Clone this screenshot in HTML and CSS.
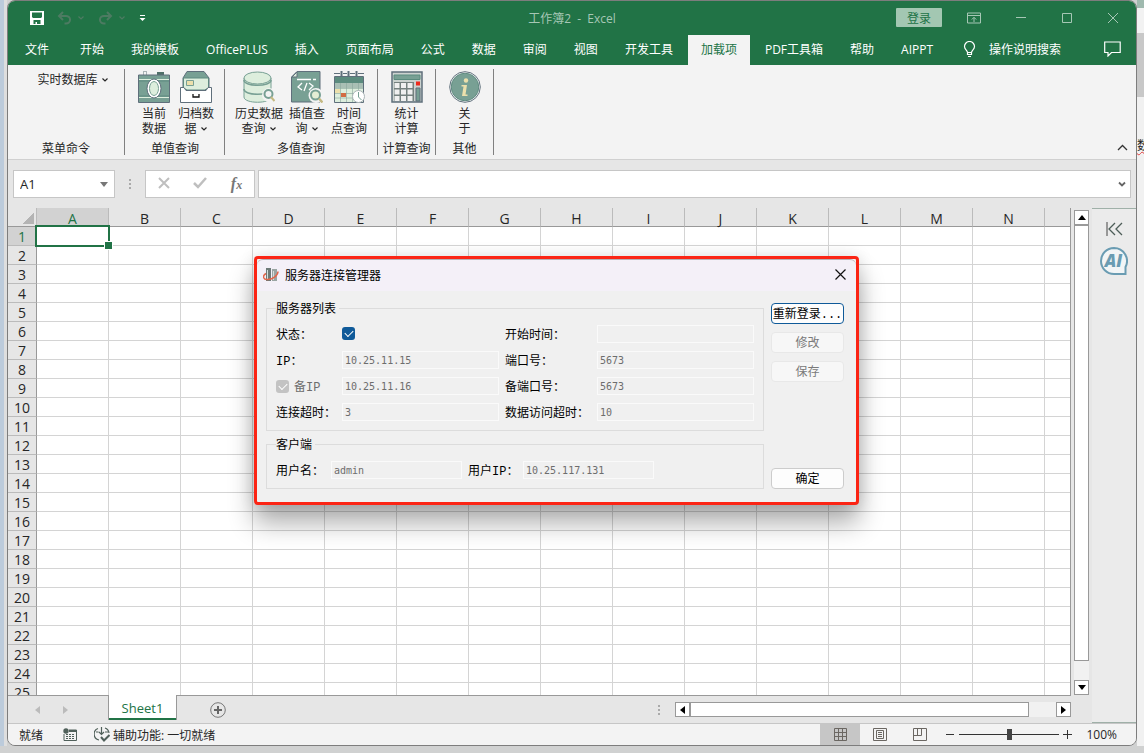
FILE: index.html
```html
<!DOCTYPE html>
<html lang="zh-CN">
<head>
  <meta charset="UTF-8" />
  <meta name="viewport" content="width=device-width, initial-scale=1.0" />
  <title>工作簿2 - Excel</title>
  <link rel="stylesheet" href="styles.css">
</head>
<body>

<svg class="symbols" aria-hidden="true">
  <symbol id="chevron" viewBox="0 0 8 8"><path d="M1.500 2.500l2.500 2.500 2.500-2.500" fill="none" stroke="currentColor" stroke-width="1.200"/></symbol>
</svg>

<div class="backdrop-left"></div>

<div class="window">
  <header class="titlebar">
    <div class="quick">
      <button aria-label="保存"><svg width="14" height="14" viewBox="0 0 14 14"><path fill="#fff" fill-rule="evenodd" d="M0 0h14v14H0zM2 1.500v4.500l1 1h8l1-1V1.500zM3.500 9v4H5.500v-2h1.500v2h3.500V9z"/></svg></button>
      <button class="dim" aria-label="撤消"><svg width="15" height="14" viewBox="0 0 15 14"><path d="M6 1L2 5l4 4M2 5h7a4 3.700 0 0 1 0 7.500H7.500" fill="none" stroke="currentColor" stroke-width="2"/></svg><svg width="8" height="8"><use href="#chevron"/></svg></button>
      <button class="dim" aria-label="恢复"><svg width="15" height="14" viewBox="0 0 15 14"><path d="M9 1l4 4-4 4M13 5H6a4 3.700 0 0 0 0 7.500H7.500" fill="none" stroke="currentColor" stroke-width="2"/></svg><svg width="8" height="8"><use href="#chevron"/></svg></button>
      <button aria-label="自定义快速访问工具栏"><svg width="7" height="8" viewBox="0 0 7 8"><path d="M1 1.500h5" stroke="#fff"/><path d="M.5 4h6l-3 3z" fill="#fff"/></svg></button>
    </div>
    <div class="title">工作簿2 &nbsp;- &nbsp;Excel</div>
    <div class="controls">
      <button class="login">登录</button>
      <button aria-label="功能区显示选项"><svg width="14" height="12" viewBox="0 0 14 12"><path d="M.5 1h13v10H.5zM.5 3.500h13M7 10V5.500M4.800 7.500L7 5.300l2.200 2.200" fill="none" stroke="currentColor"/></svg></button>
      <button aria-label="最小化"><svg width="12" height="12"><path d="M1 5.500h10" stroke="currentColor"/></svg></button>
      <button aria-label="最大化"><svg width="12" height="12"><path d="M1.500 1.500h9v9h-9z" fill="none" stroke="currentColor"/></svg></button>
      <button aria-label="关闭"><svg width="12" height="12"><path d="M1 1l10 10M11 1L1 11" stroke="currentColor"/></svg></button>
    </div>
  </header>

  <nav class="tabs">
    <a class="file" href="#">文件</a>
    <a href="#">开始</a>
    <a href="#">我的模板</a>
    <a href="#">OfficePLUS</a>
    <a href="#">插入</a>
    <a href="#">页面布局</a>
    <a href="#">公式</a>
    <a href="#">数据</a>
    <a href="#">审阅</a>
    <a href="#">视图</a>
    <a href="#">开发工具</a>
    <a class="active" href="#">加载项</a>
    <a href="#">PDF工具箱</a>
    <a href="#">帮助</a>
    <a href="#">AIPPT</a>
    <a class="tellme" href="#"><svg width="13" height="17" viewBox="0 0 13 17"><path d="M4.500 11.500c0-2-3-3-3-6a5 5 0 0 1 10 0c0 3-3 4-3 6v2h-4zM4.500 11.500h4M5 15.500h3" fill="none" stroke="#fff" stroke-width="1.200"/></svg>操作说明搜索</a>
    <button class="comment" aria-label="批注"><svg width="17" height="16" viewBox="0 0 17 16"><path d="M.7 1h15.500v10.500H7.500L4 15v-3.500H.7z" fill="none" stroke="#fff" stroke-width="1.200"/></svg></button>
  </nav>

  <div class="ribbon">
    <section class="group menu-group">
      <button class="menu-button">实时数据库<svg width="8" height="8"><use href="#chevron"/></svg></button>
      <div class="group-name">菜单命令</div>
    </section>
    <section class="group single">
      <div class="tools">
        <button>
          <svg width="32" height="32" viewBox="0 0 32 32"><path d="M5.500 0v4M8.500 0v4M5 .5h4" stroke="#a9b3b5"/><path d="M19 1h7v3h-7z" fill="#4f6f68"/><path d="M.5 4h31v27.500H.5z" fill="#78a094" stroke="#5f6f7b"/><path d="M1 8.500h30M1 26.500h30" stroke="#ddeedd"/><path d="M1 10h30M1 25h30" stroke="#5f8a80"/><ellipse cx="16" cy="17.500" rx="7" ry="9.500" fill="#fff" stroke="#5f6f7b"/><ellipse cx="16" cy="17.500" rx="4.500" ry="7" fill="#ddeedd" stroke="#78a094"/></svg>
          <span>当前<br>数据</span>
        </button>
        <button>
          <svg width="32" height="32" viewBox="0 0 32 32"><path d="M3 7l4-6.500h17L29 7v12H3z" fill="#78a094" stroke="#5f6f7b"/><path d="M3.500 7h25v10l-4 2H7l-3.500-2z" fill="#ddeedd" stroke="#5f8a80"/><path d="M6.500 9.500h7v5h-7z" fill="#ece0ac" stroke="#78a094"/><path d="M.5 16.500H4l2 3h20l2-3h3.500v15H.5z" fill="#fff" stroke="#5f6f7b"/><path d="M13 23v3h6v-3" fill="none" stroke="#111" stroke-width="1.300"/></svg>
          <span>归档数<br>据 <svg width="8" height="8"><use href="#chevron"/></svg></span>
        </button>
      </div>
      <div class="group-name">单值查询</div>
    </section>
    <section class="group multi">
      <div class="tools">
        <button class="wide">
          <svg width="32" height="32" viewBox="0 0 32 32"><path d="M1 7v19c0 7 27 7 27 0V7" fill="#ddeedd" stroke="#78a094"/><ellipse cx="14.500" cy="7" rx="13.500" ry="6" fill="#ddeedd" stroke="#78a094"/><path d="M1 9c0 7 27 7 27 0M1 18c0 7 27 7 27 0" fill="none" stroke="#78a094" stroke-width="1.600"/><circle cx="26" cy="24" r="7" fill="#f3f3f3"/><circle cx="25.500" cy="23" r="4" fill="none" stroke="#78a094" stroke-width="2"/><path d="M28 26l3.500 4" stroke="#c4b982" stroke-width="2"/></svg>
          <span>历史数据<br>查询 <svg width="8" height="8"><use href="#chevron"/></svg></span>
        </button>
        <button>
          <svg width="32" height="32" viewBox="0 0 32 32"><path d="M6 .5h23v30.500H.5V6z" fill="#78a094" stroke="#5f6f7b"/><path d="M6 1v5H1z" fill="#ddeedd" stroke="#5f6f7b"/><path d="M6 8.500h14M22 8.500h3" stroke="#fff" stroke-width="1.500"/><path d="M11 12l-4 4 4 3M18 12l4 3-4 4M16 12l-3 8" fill="none" stroke="#fff" stroke-width="1.300"/><circle cx="25" cy="24.500" r="7.500" fill="#f3f3f3"/><circle cx="24.500" cy="24" r="4.500" fill="#e4edd5" stroke="#78a094" stroke-width="2"/><path d="M28 27.500l3.500 4" stroke="#c4b982" stroke-width="2.500"/></svg>
          <span>插值查<br>询 <svg width="8" height="8"><use href="#chevron"/></svg></span>
        </button>
        <button>
          <svg width="32" height="32" viewBox="0 0 32 32"><path d="M1.500 5.500h29v26h-29z" fill="#ddeedd" stroke="#5f6f7b"/><path d="M2 6h28v6H2z" fill="#5b8b7e"/><path d="M2 12h28v5H2z" fill="#a9bfb5"/><path d="M2 18h5v4H2z" fill="#ece0ac"/><path d="M2 17.500h28M2 22.500h28M2 27h28M7.500 12v19M13.500 12v19M19.500 12v19M25.500 12v19" stroke="#8aa69c" stroke-opacity=".6"/><path d="M8 22h5v4H8z" fill="#d26b42"/><path d="M1 2.500h6M10 2.500h4M17 2.500h5M25 2.500h6" stroke="#5f6f7b"/><path d="M8.500 0v5M15.500 0v5M23.500 0v5" stroke="#5f6f7b" stroke-width="2"/><circle cx="25.500" cy="25.500" r="6" fill="#fff" stroke="#a9b3b5"/><path d="M25.500 21v5l3 3" fill="none" stroke="#78a094"/></svg>
          <span>时间<br>点查询</span>
        </button>
      </div>
      <div class="group-name">多值查询</div>
    </section>
    <section class="group">
      <div class="tools">
        <button>
          <svg width="32" height="32" viewBox="0 0 32 32"><path d="M1 1h30v30H1z" fill="#cbd2cf" stroke="#5f6f7b" stroke-width="1.500"/><path d="M3 4h26v4.500H3z" fill="#78a094" stroke="#5b8b7e"/><path d="M3 11h20v19H3z" fill="#75817f"/><g fill="#f0f0f0"><path d="M3.500 12h5v5h-5zM10 12h5v5h-5zM16.500 12h5v5h-5zM3.500 18.500h5v5h-5zM10 18.500h5v5h-5zM16.500 18.500h5v5h-5zM3.500 25h5v5h-5zM10 25h5v5h-5zM16.500 25h5v5h-5z"/></g><path d="M25 10.500h4v4h-4z" fill="#ed2a1c"/><path d="M25 17h4v13h-4z" fill="#78a094" stroke="#5f6f7b"/></svg>
          <span>统计<br>计算</span>
        </button>
      </div>
      <div class="group-name">计算查询</div>
    </section>
    <section class="group">
      <div class="tools">
        <button>
          <svg width="32" height="32" viewBox="0 0 32 32"><circle cx="16" cy="16" r="15.300" fill="#fff" stroke="#5f6f7b"/><circle cx="16" cy="16" r="13.800" fill="#78a094" stroke="#5f8a80"/><circle cx="17" cy="9.500" r="2.200" fill="#ece0ac"/><path d="M12.500 14h5.500l-1.500 9.500h2V25h-5.500l1.500-9.500h-2z" fill="#ece0ac"/></svg>
          <span>关<br>于</span>
        </button>
      </div>
      <div class="group-name">其他</div>
    </section>
    <button class="collapse" aria-label="折叠功能区"><svg width="11" height="7"><path d="M1 6l4.500-4.500L10 6" fill="none" stroke="#333" stroke-width="1.300"/></svg></button>
  </div>

  <div class="formula-bar">
    <div class="name-box">
      <input type="text" value="A1" aria-label="名称框">
      <svg width="8" height="5"><path d="M0 0h8L4 5z" fill="#777"/></svg>
    </div>
    <div class="grip"></div>
    <div class="formula-buttons">
      <button aria-label="取消"><svg width="12" height="12"><path d="M1 1l10 10M11 1L1 11" stroke="#bfbfbf" stroke-width="2"/></svg></button>
      <button aria-label="输入"><svg width="14" height="12"><path d="M1 6l4 4 8-9" fill="none" stroke="#bfbfbf" stroke-width="2.500"/></svg></button>
      <button class="fx" aria-label="插入函数">f<small>x</small></button>
    </div>
    <div class="formula-input">
      <input type="text" aria-label="编辑栏">
      <svg width="8" height="8"><path d="M1 2.500l3 3 3-3" fill="none" stroke="#666" stroke-width="1.800"/></svg>
    </div>
  </div>

  <div class="workspace">
    <main class="book">
      <div class="sheet-area">
        <div class="sheet">
          <table>
            <thead><tr id="columns"></tr></thead>
            <tbody id="rows"></tbody>
          </table>
        </div>
        <div class="scroll vertical">
          <button aria-label="向上滚动"><svg width="8" height="5"><path d="M0 5h8L4 0z"/></svg></button>
          <div class="thumb"></div>
          <button aria-label="向下滚动"><svg width="8" height="5"><path d="M0 0h8L4 5z"/></svg></button>
        </div>
      </div>
      <div class="sheet-tabs">
        <div class="tab-arrows">
          <svg width="5" height="8"><path d="M5 0v8L0 4z" fill="#bbb"/></svg>
          <svg width="5" height="8"><path d="M0 0v8l5-4z" fill="#bbb"/></svg>
        </div>
        <button class="sheet-tab">Sheet1</button>
        <div class="tab-rest">
          <button class="add-sheet" aria-label="新工作表"><svg width="16" height="16"><circle cx="8" cy="8" r="7.300" fill="none" stroke="#777"/><path d="M8 4v8M4 8h8" stroke="#666" stroke-width="2"/></svg></button>
          <div class="grip"></div>
          <div class="scroll horizontal">
            <button aria-label="向左滚动"><svg width="5" height="8"><path d="M5 0v8L0 4z"/></svg></button>
            <div class="thumb"></div>
            <button aria-label="向右滚动"><svg width="5" height="8"><path d="M0 0v8l5-4z"/></svg></button>
          </div>
        </div>
      </div>
    </main>
    <aside class="side-panel">
      <button aria-label="展开"><svg width="17" height="14" viewBox="0 0 17 14"><path d="M1 0v14" stroke="#444"/><path d="M9 1L3 7l6 6M16 1l-6 6 6 6" fill="none" stroke="#4d5d58" stroke-width="1.300"/></svg></button>
      <button aria-label="AI"><svg width="28" height="28" viewBox="0 0 28 28"><path d="M14 1a13 13 0 1 0 0 26h11.500v-7A13 13 0 0 0 14 1z" fill="#f2f5f6" stroke="#6a9cb2" stroke-width="2"/><text x="13.500" y="20" text-anchor="middle" class="ai-text">AI</text></svg></button>
    </aside>
  </div>

  <footer class="status">
    <span class="ready">就绪</span>
    <svg width="14" height="13" viewBox="0 0 14 13"><path d="M1 6v6.500h12.500V2H6" fill="none" stroke="#50605a"/><circle cx="3" cy="3" r="2.700" fill="#50605a"/><path d="M6 2h8v2H6z" fill="#50605a"/><path d="M3 6.500h9M3 8.500h9M3 10.500h9" stroke="#50605a" stroke-dasharray="2 1"/></svg>
    <span class="access"><svg width="16" height="15" viewBox="0 0 16 15"><path d="M4 1.500a6 6 0 0 0 1 11.500M11 1a6 6 0 0 1 4 5M7.500 0v7M5 5l2.500 2.500L10 5M2 5h2.500M11 5h3" fill="none" stroke="#50605a" stroke-width="1.200"/><path d="M7 10l3 3.500L15.500 8" fill="none" stroke="#50605a" stroke-width="2"/></svg>辅助功能: 一切就绪</span>
    <div class="views">
      <button class="current" aria-label="普通"><svg width="13" height="13"><path d="M.5.5h12v12H.5zM.5 4.500h12M.5 8.500h12M4.500.5v12M8.500.5v12" fill="none" stroke="#6b6762"/></svg></button>
      <button aria-label="页面布局"><svg width="14" height="13"><path d="M.5.5h13v12H.5zM3.500 2.500h7v8h-7zM5 4.500h4M5 6.500h4M5 8.500h4" fill="none" stroke="#6b6762"/></svg></button>
      <button aria-label="分页预览"><svg width="14" height="13"><path d="M.5.5h13v12H.5zM.5 7.500h8v-7M4.500.5v7" fill="none" stroke="#6b6762"/></svg></button>
    </div>
    <div class="zoom">
      <button aria-label="缩小"><svg width="9" height="9"><path d="M0 4.500h8" stroke="#333"/></svg></button>
      <input type="range" min="0" max="100" value="50" aria-label="显示比例">
      <button aria-label="放大"><svg width="9" height="9"><path d="M0 4.500h9M4.500 0v9" stroke="#333"/></svg></button>
      <span>100%</span>
    </div>
  </footer>

  <div class="dialog" role="dialog" aria-labelledby="dialog-title">
    <div class="dialog-title">
      <svg width="16" height="14" viewBox="0 0 16 14"><path d="M3 0h5v13H3z" fill="#6d7a78"/><path d="M9 1h5v12H9z" fill="#9aa5a3"/><path d="M4 2h1v10H4zM10 3h1v9h-1z" fill="#d4dcd9"/><path d="M3 5.500C-1 8 0 12 5 11.500s10-4 10-8" fill="none" stroke="#e2654a" stroke-width="1.500"/></svg>
      <h2 id="dialog-title">服务器连接管理器</h2>
      <button aria-label="关闭"><svg width="11" height="11"><path d="M.5.5l10 10M10.500.5l-10 10" stroke="#111" stroke-width="1.200"/></svg></button>
    </div>
    <form class="dialog-body">
      <div class="fields">
        <fieldset>
          <legend>服务器列表</legend>
          <div class="server-grid">
            <label for="state">状态：</label>
            <input type="checkbox" id="state" checked>
            <label for="start">开始时间：</label>
            <input type="text" id="start" disabled>
            <label for="ip">IP：</label>
            <input type="text" id="ip" value="10.25.11.15" disabled>
            <label for="port">端口号：</label>
            <input type="text" id="port" value="5673" disabled>
            <label class="backup"><input type="checkbox" checked disabled>备IP</label>
            <input type="text" value="10.25.11.16" aria-label="备IP" disabled>
            <label for="port2">备端口号：</label>
            <input type="text" id="port2" value="5673" disabled>
            <label for="timeout">连接超时：</label>
            <input type="text" id="timeout" value="3" disabled>
            <label for="data-timeout">数据访问超时：</label>
            <input type="text" id="data-timeout" value="10" disabled>
          </div>
        </fieldset>
        <fieldset>
          <legend>客户端</legend>
          <div class="client-grid">
            <label for="user">用户名：</label>
            <input type="text" id="user" value="admin" disabled>
            <label for="user-ip">用户IP：</label>
            <input type="text" id="user-ip" value="10.25.117.131" disabled>
          </div>
        </fieldset>
      </div>
      <div class="dialog-buttons">
        <button type="button" class="primary">重新登录...</button>
        <button type="button" disabled>修改</button>
        <button type="button" disabled>保存</button>
        <button type="button" class="ok">确定</button>
      </div>
    </form>
  </div>
</div>

<div class="backdrop-right"><span>数</span></div>

<script>
  const letters = "ABCDEFGHIJKLMN".split("");
  const columns = document.getElementById("columns");
  const rows = document.getElementById("rows");

  columns.innerHTML = '<th class="corner"></th>' +
    letters.map((l, i) => `<th class="col${i === 0 ? " selected" : ""}">${l}</th>`).join("") + "<th></th>";

  for (let r = 1; r <= 25; r++) {
    const tr = document.createElement("tr");
    tr.innerHTML = `<th${r === 1 ? ' class="selected"' : ""}>${r}</th>` + "<td></td>".repeat(letters.length + 1);
    rows.appendChild(tr);
  }
  rows.querySelector("td").className = "active-cell";
</script>

</body>
</html>
```
FILE: styles.css
```css
* {
  box-sizing: border-box;
}

html, body {
  margin: 0;
  height: 100%;
}

body {
  display: grid;
  grid-template-columns: 7px 1fr 7px;
  padding-bottom: 7px;
  overflow: hidden;
  background: #d0d1d1;
  font-family: "Open Sans", "Noto Sans CJK SC", sans-serif;
  font-size: 12px;
  color: #262626;
}

button, input {
  font: inherit;
  color: inherit;
  margin: 0;
}

button {
  border: none;
  background: none;
  padding: 0;
}

svg {
  flex: none;
}

.symbols {
  position: absolute;
  width: 0;
  height: 0;
}

.backdrop-left {
  background: #bccbdb;
  border-right: 3px solid #dedede;
}

.backdrop-right {
  overflow: hidden;
  background: linear-gradient(#9fb9ae 8px, #f2f2f2 8px, #f2f2f2 33px, #c8c8c8 33px, #c8c8c8 97px, #f1f1f1 97px);
  padding-top: 136px;
}

.backdrop-right span {
  text-decoration: underline wavy #e04040 1px;
}

.window {
  position: relative;
  display: flex;
  flex-direction: column;
  min-height: 0;
  border: 1px solid #7d7d7d;
  border-radius: 8px;
  overflow: hidden;
  background: #e6e6e6;
}

/* title bar */

.titlebar {
  display: grid;
  grid-template-columns: 1fr auto 1fr;
  align-items: center;
  height: 34px;
  padding-bottom: 1px;
  background: #217346;
  color: #a6c7b5;
}

.quick {
  display: flex;
  align-items: center;
  gap: 13px;
  padding-left: 22px;
}

.quick button {
  display: flex;
  align-items: center;
  gap: 5px;
}

.quick .dim {
  color: #4d7b62;
}

.controls {
  display: flex;
  justify-content: flex-end;
  align-items: center;
  gap: 34px;
  padding-right: 17px;
}

.controls button {
  display: flex;
}

.controls .login {
  justify-content: center;
  align-items: center;
  width: 46px;
  height: 19px;
  margin-right: -9px;
  background: #a3c7b2;
  border-radius: 1px;
  color: #217346;
}

/* ribbon */

.tabs {
  display: flex;
  gap: 3px;
  height: 30px;
  padding-left: 3px;
  background: #217346;
}

.tabs a {
  display: flex;
  align-items: center;
  padding: 0 12px 2px;
  color: #fff;
  text-decoration: none;
  white-space: nowrap;
}

.tabs .file {
  padding: 0 16px 2px 14px;
}

.tabs .active {
  padding: 0 13px 2px;
  background: #f3f3f3;
  color: #217346;
}

.tabs .tellme {
  gap: 13px;
  padding-left: 15px;
}

.comment {
  display: flex;
  align-items: center;
  margin-left: auto;
  padding: 0 15px 2px 0;
}

.ribbon {
  display: flex;
  height: 95px;
  padding: 4px 0;
  background: #f3f3f3;
  border-bottom: 1px solid #d0d0d0;
}

.group {
  display: flex;
  flex-direction: column;
  justify-content: space-between;
  align-items: center;
  min-width: 58px;
  border-right: 1px solid #808080;
}

.menu-group {
  width: 117px;
}

.single {
  padding: 0 7px 0 8px;
}

.multi {
  padding: 0 7px;
}

.menu-button {
  display: flex;
  align-items: center;
  gap: 3px;
  margin-left: 14px;
  line-height: 22px;
}

.tools {
  display: flex;
  padding-top: 2px;
}

.tools button {
  display: flex;
  flex-direction: column;
  align-items: center;
  gap: 3px;
  width: 42px;
  line-height: 15px;
  white-space: nowrap;
}

.tools .wide {
  width: 54px;
}

.group-name {
  line-height: 12px;
  white-space: nowrap;
}

.collapse {
  align-self: flex-end;
  margin-left: auto;
  padding-right: 8px;
}

/* formula bar */

.formula-bar {
  display: flex;
  height: 48px;
  padding: 10px 5px;
}

.name-box, .formula-buttons, .formula-input {
  display: flex;
  align-items: center;
  background: #fff;
  border: 1px solid #c6c6c6;
}

.name-box {
  width: 102px;
  padding: 0 6px;
  font-size: 13px;
}

.name-box input, .formula-input input {
  flex: 1;
  min-width: 0;
  padding: 0;
  border: none;
  background: none;
}

.grip {
  width: 2px;
  height: 10px;
  background: repeating-linear-gradient(#aaa 0, #aaa 2px, transparent 2px, transparent 4px);
}

.formula-bar .grip {
  align-self: center;
  margin: 0 14px;
}

.formula-buttons {
  justify-content: space-around;
  width: 110px;
  margin-right: 3px;
}

.fx {
  font: italic bold 16px "Liberation Serif", serif;
  color: #777;
}

.fx small {
  font-size: 12px;
}

.formula-input {
  flex: 1;
  padding: 0 4px;
}

/* sheet */

.workspace {
  display: flex;
  flex: 1;
  min-height: 0;
}

.book {
  display: flex;
  flex-direction: column;
  flex: 1;
  min-width: 0;
}

.sheet-area {
  display: flex;
  flex: 1;
  gap: 3px;
  min-height: 0;
  padding-right: 3px;
}

.sheet {
  flex: 1;
  overflow: hidden;
  border-right: 1px solid #999;
}

table {
  width: 100%;
  table-layout: fixed;
  border-spacing: 0;
}

th, td {
  height: 19px;
  padding: 0;
  border-right: 1px solid #d4d4d4;
  border-bottom: 1px solid #d4d4d4;
}

td {
  background: #fff;
}

th {
  padding-top: 2px;
  background: #e6e6e6;
  border-right-color: #999;
  border-bottom-color: #bbb;
  font-size: 14px;
  font-weight: 400;
  line-height: 16px;
}

thead th {
  padding-top: 3px;
  border-right-color: #bbb;
  border-bottom-color: #999;
  line-height: 15px;
}

th:last-child, td:last-child {
  border-right: none;
}

.corner {
  width: 29px;
  background: linear-gradient(135deg, #e6e6e6 50%, #b4b4b4 50%) 15px 5px / 11px 11px no-repeat #e6e6e6;
}

.col {
  width: 72px;
}

th.selected {
  background: #d2d2d2;
  color: #217346;
}

.active-cell {
  position: relative;
}

.active-cell::before {
  content: "";
  position: absolute;
  inset: -2px;
  z-index: 1;
  border: 2px solid #217346;
}

.active-cell::after {
  content: "";
  position: absolute;
  right: -5px;
  bottom: -5px;
  z-index: 2;
  width: 7px;
  height: 7px;
  background: #217346;
  border: 1px solid #fff;
}

.scroll {
  display: flex;
  background: #f1f1f1;
}

.scroll button {
  display: flex;
  align-items: center;
  justify-content: center;
  width: 15px;
  height: 15px;
  background: #fff;
  border: 1px solid #999;
}

.scroll .thumb {
  flex: 1;
  background: #fff;
  border: 1px solid #999;
}

.vertical {
  flex-direction: column;
  margin-top: 2px;
}

.vertical .thumb {
  margin-bottom: 19px;
}

.horizontal {
  width: 396px;
}

.horizontal .thumb {
  margin-right: 27px;
}

.sheet-tabs {
  display: flex;
  height: 28px;
}

.tab-arrows {
  display: flex;
  align-items: center;
  gap: 23px;
  width: 100px;
  padding-left: 27px;
  border-top: 1px solid #999;
}

.sheet-tab {
  width: 69px;
  height: 25px;
  background: #fff;
  border: 1px solid #999;
  border-width: 0 1px;
  box-shadow: inset 0 -2px #217346;
  color: #217346;
  font-size: 13px;
}

.tab-rest {
  display: flex;
  align-items: center;
  flex: 1;
  margin-right: 21px;
  padding-left: 33px;
  border-top: 1px solid #999;
}

.add-sheet {
  display: flex;
}

.tab-rest .grip {
  margin: 0 15px 0 auto;
}

.side-panel {
  display: flex;
  flex-direction: column;
  align-items: center;
  gap: 7px;
  width: 44px;
  padding-top: 13px;
  background: #ebebeb;
  border-top: 1px solid #9fb0a8;
  border-bottom: 1px solid #9fb0a8;
}

.ai-text {
  font: italic 800 17px "Open Sans", sans-serif;
  fill: #6a9cb2;
}

/* status bar */

.status {
  display: flex;
  align-items: center;
  height: 22px;
  padding-left: 11px;
  background: #f3f3f3;
  border-top: 1px solid #c6c6c6;
}

.ready {
  margin-right: 20px;
}

.access {
  display: flex;
  align-items: center;
  gap: 3px;
  margin-left: 17px;
}

.views {
  display: flex;
  align-self: stretch;
  margin-left: auto;
}

.views button {
  display: flex;
  align-items: center;
  justify-content: center;
  width: 40px;
}

.views .current {
  background: #c6c6c6;
}

.zoom {
  display: flex;
  align-items: center;
  gap: 4px;
  padding: 0 19px 0 6px;
}

.zoom button {
  display: flex;
}

.zoom span {
  margin-left: 10px;
}

.zoom input {
  appearance: none;
  width: 100px;
  height: 11px;
  background: linear-gradient(#333, #333) center / 100% 1px no-repeat;
}

.zoom input::-webkit-slider-thumb {
  appearance: none;
  width: 5px;
  height: 11px;
  background: #444;
}

/* server dialog */

.dialog {
  position: absolute;
  left: 246px;
  top: 255px;
  z-index: 5;
  width: 605px;
  background: #f0f0f0;
  border: 3px solid #fb2414;
  border-radius: 4px;
  box-shadow: 0 18px 26px rgba(0, 0, 0, 0.32), 0 0 16px rgba(0, 0, 0, 0.12);
  color: #000;
}

.dialog-title {
  display: flex;
  align-items: center;
  gap: 6px;
  height: 32px;
  padding: 0 10px 2px 6px;
  background: #f4f0f8;
  border-top: 1px solid #b5b0b5;
  border-radius: 6px 6px 0 0;
}

.dialog-title h2 {
  flex: 1;
  margin: 0;
  font-size: 12px;
  font-weight: 400;
}

.dialog-title button {
  display: flex;
}

.dialog-body {
  display: flex;
  gap: 7px;
  padding: 9px 12px 13px 9px;
  font-family: "Liberation Mono", "Noto Sans CJK SC", monospace;
}

.fields {
  display: flex;
  flex-direction: column;
  flex: 1;
  gap: 5px;
}

fieldset {
  min-width: 0;
  margin: 0;
  padding: 9px;
  border: 1px solid #dcdcdc;
}

legend {
  padding: 4px 3px 0 0;
  line-height: 12px;
}

.server-grid {
  display: grid;
  grid-template-columns: 66px 1fr 98px 1fr;
  grid-auto-rows: 18px;
  row-gap: 8px;
  align-items: center;
}

.server-grid label:nth-of-type(even) {
  padding-left: 6px;
}

.client-grid {
  display: grid;
  grid-template-columns: 55px 131px 61px 131px;
  height: 18px;
  align-items: center;
}

.client-grid label:nth-of-type(even) {
  padding-left: 6px;
}

.dialog label {
  padding-top: 4px;
  line-height: 14px;
  white-space: nowrap;
}

.dialog input[type="text"] {
  width: 100%;
  height: 18px;
  padding: 0 2px;
  background: #f0f0f0;
  border: 1px solid #fafafa;
  font-family: "DejaVu Sans Mono", monospace;
  font-size: 10px;
  color: #6d6d6d;
}

.dialog input[type="checkbox"] {
  appearance: none;
  display: grid;
  place-items: center;
  width: 13px;
  height: 13px;
  margin-bottom: 2px;
  background: #0f5a99;
  border-radius: 3px;
}

.dialog input[type="checkbox"]::before {
  content: "";
  width: 7px;
  height: 4px;
  margin-bottom: 2px;
  border: 1px solid #fff;
  border-width: 0 0 1px 1px;
  transform: rotate(-45deg);
}

.dialog .backup {
  display: flex;
  align-items: center;
  gap: 5px;
  color: #6d6d6d;
}

.dialog input[type="checkbox"]:disabled {
  margin-bottom: 4px;
  background: #c3c3c3;
}

.dialog-buttons {
  display: flex;
  flex-direction: column;
  gap: 8px;
  width: 73px;
  padding-top: 3px;
}

.dialog-buttons button {
  height: 21px;
  padding-bottom: 2px;
  background: #fdfdfd;
  border: 1px solid #ccc;
  border-radius: 4px;
  white-space: nowrap;
}

.dialog-buttons .primary {
  border-color: #0f5a99;
}

.dialog-buttons button:disabled {
  background: #f7f7f7;
  border-color: #e8e8e8;
  color: #7a7a7a;
}

.dialog-buttons .ok {
  margin-top: auto;
}
```
